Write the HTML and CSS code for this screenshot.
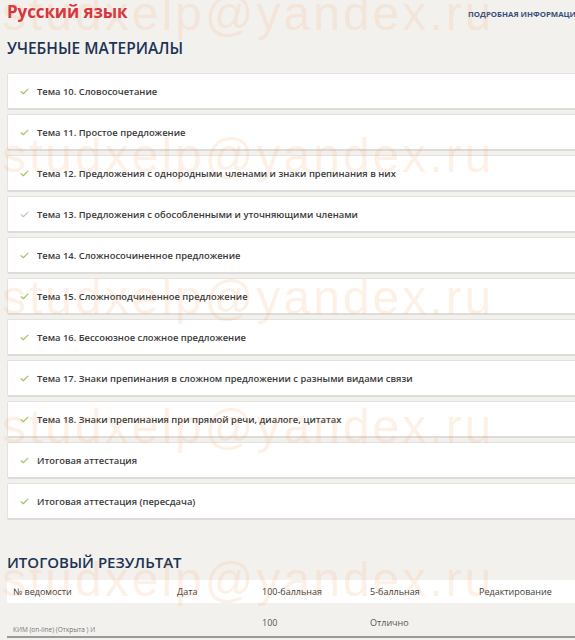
FILE: index.html
```html
<!DOCTYPE html>
<html lang="ru">
<head>
<meta charset="utf-8">
<title>Русский язык</title>
<link rel="stylesheet" href="styles.css">
</head>
<body>
<div class="page">
  <header class="top">
    <h1 class="subject">Русский язык</h1>
    <a class="more" href="#">ПОДРОБНАЯ ИНФОРМАЦИЯ</a>
  </header>

  <h2 class="section-title first">УЧЕБНЫЕ МАТЕРИАЛЫ</h2>
  <ul class="topics">
    <li class="topic"><svg class="check" viewBox="0 0 10 8"><polyline points="1,4.2 3.6,6.6 9,1.2"/></svg><span>Тема 10. Словосочетание</span></li>
    <li class="topic"><svg class="check" viewBox="0 0 10 8"><polyline points="1,4.2 3.6,6.6 9,1.2"/></svg><span>Тема 11. Простое предложение</span></li>
    <li class="topic"><svg class="check" viewBox="0 0 10 8"><polyline points="1,4.2 3.6,6.6 9,1.2"/></svg><span>Тема 12. Предложения с однородными членами и знаки препинания в них</span></li>
    <li class="topic"><svg class="check muted" viewBox="0 0 10 8"><polyline points="1,4.2 3.6,6.6 9,1.2"/></svg><span>Тема 13. Предложения с обособленными и уточняющими членами</span></li>
    <li class="topic"><svg class="check" viewBox="0 0 10 8"><polyline points="1,4.2 3.6,6.6 9,1.2"/></svg><span>Тема 14. Сложносочиненное предложение</span></li>
    <li class="topic"><svg class="check" viewBox="0 0 10 8"><polyline points="1,4.2 3.6,6.6 9,1.2"/></svg><span>Тема 15. Сложноподчиненное предложение</span></li>
    <li class="topic"><svg class="check" viewBox="0 0 10 8"><polyline points="1,4.2 3.6,6.6 9,1.2"/></svg><span>Тема 16. Бессоюзное сложное предложение</span></li>
    <li class="topic"><svg class="check" viewBox="0 0 10 8"><polyline points="1,4.2 3.6,6.6 9,1.2"/></svg><span>Тема 17. Знаки препинания в сложном предложении с разными видами связи</span></li>
    <li class="topic"><svg class="check" viewBox="0 0 10 8"><polyline points="1,4.2 3.6,6.6 9,1.2"/></svg><span>Тема 18. Знаки препинания при прямой речи, диалоге, цитатах</span></li>
    <li class="topic"><svg class="check" viewBox="0 0 10 8"><polyline points="1,4.2 3.6,6.6 9,1.2"/></svg><span>Итоговая аттестация</span></li>
    <li class="topic"><svg class="check" viewBox="0 0 10 8"><polyline points="1,4.2 3.6,6.6 9,1.2"/></svg><span>Итоговая аттестация (пересдача)</span></li>
  </ul>

  <h2 class="section-title second">ИТОГОВЫЙ РЕЗУЛЬТАТ</h2>
  <div class="results">
    <div class="row head">
      <div class="cell">№ ведомости</div>
      <div class="cell">Дата</div>
      <div class="cell">100-балльная</div>
      <div class="cell">5-балльная</div>
      <div class="cell">Редактирование</div>
    </div>
    <div class="row body-row">
      <div class="cell doc">КИМ (on-line) (Открыта ) И</div>
      <div class="cell"></div>
      <div class="cell">100</div>
      <div class="cell">Отлично</div>
      <div class="cell"></div>
    </div>
  </div>
</div>

<div class="watermarks" aria-hidden="true">
  <span class="wm wm1">studxelp@yandex.ru</span>
  <span class="wm wm2">studxelp@yandex.ru</span>
  <span class="wm wm3">studxelp@yandex.ru</span>
  <span class="wm wm4">studxelp@yandex.ru</span>
  <span class="wm wm5">studxelp@yandex.ru</span>
</div>
</body>
</html>
```

FILE: styles.css
```css
html, body {
  margin: 0;
  padding: 0;
  overflow: hidden;
}
body {
  background: #f3f1ee;
  font-family: "Open Sans", "Noto Sans", sans-serif;
  color: #333;
  width: 575px;
  height: 640px;
  position: relative;
}
.page {
  width: 620px;
  padding-left: 7px;
  box-sizing: border-box;
}
.top {
  display: grid;
  grid-template-columns: 461px auto;
  align-items: start;
}
.subject {
  margin: 0;
  font-size: 17px;
  line-height: 24px;
  font-weight: 700;
  color: #d8343e;
  letter-spacing: -0.1px;
}
.more {
  padding-top: 8px;
  font-size: 7.8px;
  line-height: 12px;
  font-weight: 700;
  color: #36507a;
  text-decoration: none;
  white-space: nowrap;
}
.section-title {
  margin: 0;
  font-size: 15.5px;
  line-height: 22px;
  font-weight: 600;
  color: #1d3354;
}
.section-title.first {
  margin-top: 13px;
}
.section-title.second {
  margin-top: 31px;
  font-size: 15px;
}
.topics {
  list-style: none;
  margin: 14px 0 0 0;
  padding: 0;
  display: flex;
  flex-direction: column;
  gap: 4px;
}
.topic {
  height: 37px;
  box-sizing: border-box;
  background: #fff;
  border: 1px solid #e4e2de;
  border-bottom: 2px solid #dedcd8;
  border-radius: 2px;
  display: flex;
  align-items: center;
  padding-left: 12px;
  gap: 8px;
  font-size: 9.4px;
  font-weight: 600;
  color: #3a3a3a;
  white-space: nowrap;
}
.check {
  width: 9px;
  height: 7px;
  flex-shrink: 0;
}
.check polyline {
  fill: none;
  stroke: #9dc45c;
  stroke-width: 1.3;
  stroke-linecap: round;
  stroke-linejoin: round;
}
.check.muted polyline {
  stroke: #c2c4c0;
}
.results {
  margin-top: 7px;
}
.row {
  display: grid;
  grid-template-columns: 164px 85px 108px 109px 1fr;
}
.row.head {
  background: #fff;
  height: 23px;
  align-items: center;
  font-size: 9px;
  color: #3c3c3c;
}
.row.body-row {
  height: 35px;
  box-sizing: border-box;
  border-bottom: 2px solid #9a9a9a;
  font-size: 9px;
  color: #555;
  align-items: start;
  padding-top: 13px;
}
.cell {
  padding-left: 6px;
  white-space: nowrap;
}
.cell.doc {
  font-size: 6.5px;
  color: #777;
  padding-top: 9px;
}
.watermarks {
  position: absolute;
  inset: 0;
  pointer-events: none;
}
.wm {
  position: absolute;
  left: 2px;
  font-family: "Liberation Sans", Arial, sans-serif;
  font-size: 48px;
  line-height: 48px;
  letter-spacing: 3px;
  color: rgba(245, 145, 70, 0.15);
  white-space: nowrap;
}
.wm1 { top: -10px; }
.wm2 { top: 132px; }
.wm3 { top: 274px; }
.wm4 { top: 403px; }
.wm5 { top: 556px; }
```
